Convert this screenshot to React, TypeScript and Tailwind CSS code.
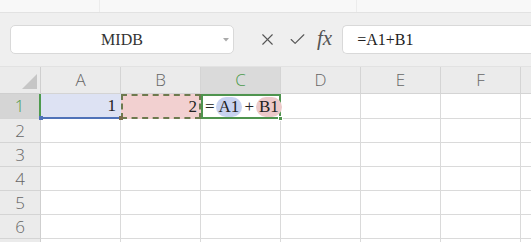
import { X, Check } from "lucide-react";

const COLS = ["A", "B", "C", "D", "E", "F"];
const ROWS = [1, 2, 3, 4, 5, 6, 7];

const serif = "font-['SimSun','Liberation_Serif','DejaVu_Serif',serif]";
const sans = "font-['Open_Sans','Noto_Sans',sans-serif]";

export default function App() {
  return (
    <div className="w-[531px] h-[242px] overflow-hidden bg-white select-none">
      {/* ── top strip ── */}
      <div className="h-[13px] bg-[#f8f8f8] border-b border-[#e2e2e2] flex">
        <div className="w-[100px] border-r border-[#ececec]" />
        <div className="w-[257px] border-r border-[#ececec]" />
      </div>

      {/* ── formula bar ── */}
      <div className="h-[54px] bg-[#efefef] flex items-center border-b border-[#e2e2e2]">
        <div className="ml-[10px] w-[224px] h-[29px] bg-white border border-[#d9d9d9] rounded-[5px] flex items-center relative">
          <span className={`${serif} text-[16px] text-[#333] w-full text-center`}>MIDB</span>
          <svg className="absolute right-[4px] top-[12px]" width="6" height="4" viewBox="0 0 6 4">
            <path d="M0 0 L6 0 L3 3.5 Z" fill="#aaa" />
          </svg>
        </div>
        <div className="w-[24px]" />
        <X size={19} strokeWidth={1.4} className="text-[#555]" />
        <div className="w-[11px]" />
        <Check size={19} strokeWidth={1.4} className="text-[#555]" />
        <div className="w-[10px]" />
        <span className="font-['Liberation_Serif',serif] italic text-[21px] leading-none text-[#555] -mt-[3px]">fx</span>
        <div className="ml-[10px] flex-1 h-[29px] bg-white border border-[#d9d9d9] border-r-0 rounded-l-[5px] flex items-center pl-[14px]">
          <span className={`${serif} text-[16px] text-[#222]`}>=A1+B1</span>
        </div>
      </div>

      {/* ── grid ── */}
      <div className="grid grid-cols-[41px_80px_80px_80px_80px_80px_80px_1fr]">
        {/* header row */}
        <div className="h-[27px] bg-[#ebebeb] border-r border-b border-[#cfcfcf] relative">
          <svg className="absolute left-[22px] top-[7px]" width="15" height="15" viewBox="0 0 15 15">
            <path d="M15 0 L15 15 L0 15 Z" fill="#c6c6c6" />
          </svg>
        </div>
        {COLS.map((c) => (
          <div
            key={c}
            className={`h-[27px] border-r border-b border-[#d4d4d4] flex items-center justify-center ${sans} font-light text-[17px] ${
              c === "C" ? "bg-[#dadada] text-[#4d9a4d]" : "bg-[#ebebeb] text-[#666]"
            }`}
          >
            {c}
          </div>
        ))}
        <div className="h-[27px] bg-[#ebebeb] border-b border-[#d4d4d4]" />

        {ROWS.map((r) => (
          <Row key={r} r={r} />
        ))}
      </div>
    </div>
  );
}

function Row({ r }: { r: number }) {
  const h = r === 1 ? "h-[25px]" : "h-[24px]";
  return (
    <>
      <div
        className={`${h} flex items-center justify-center ${sans} font-light text-[17px] border-b border-[#d4d4d4] ${
          r === 1
            ? "bg-[#d5d5d5] text-[#4d9a4d] border-r-2 border-r-[#4d9a4d]"
            : "bg-[#ebebeb] text-[#666] border-r border-r-[#cfcfcf]"
        }`}
      >
        {r < 7 ? r : ""}
      </div>
      {COLS.map((c) => {
        if (r === 1 && c === "A")
          return (
            <div key={c} className={`${h} relative bg-[#dde2f3] border-b-2 border-[#4f72b8] flex items-center justify-end pr-[5px]`}>
              <span className={`${serif} text-[17px] text-[#222]`}>1</span>
              <div className="absolute -left-[2px] -bottom-[3px] w-[4px] h-[4px] bg-[#4f72b8]" />
              <div className="absolute -right-[2px] -bottom-[3px] w-[4px] h-[4px] bg-[#7a6a4a]" />
            </div>
          );
        if (r === 1 && c === "B")
          return (
            <div key={c} className={`${h} bg-[#f2d0d0] border-2 border-dashed border-[#6d7a4e] flex items-center justify-end pr-[2px]`}>
              <span className={`${serif} text-[17px] text-[#222]`}>2</span>
            </div>
          );
        if (r === 1 && c === "C")
          return (
            <div key={c} className={`${h} relative border-2 border-[#4f944f] flex items-center pl-[2px] ${serif} text-[17px] text-[#222]`}>
              <span>=</span>
              <span className="ml-[1px] px-[3px] rounded-full bg-[#c8d3f0] leading-[20px]">A1</span>
              <span className="mx-[2px]">+</span>
              <span className="px-[3px] rounded-full bg-[#ecc9c9] leading-[20px]">B1</span>
              <span className="ml-[2px] w-[1px] h-[17px] bg-[#222]" />
              <div className="absolute -right-[4px] -bottom-[4px] w-[5px] h-[5px] bg-[#4f944f] border border-white" />
            </div>
          );
        return <div key={c} className={`${h} border-r border-b border-[#dadada]`} />;
      })}
      <div className={`${h} border-b border-[#dadada]`} />
    </>
  );
}
